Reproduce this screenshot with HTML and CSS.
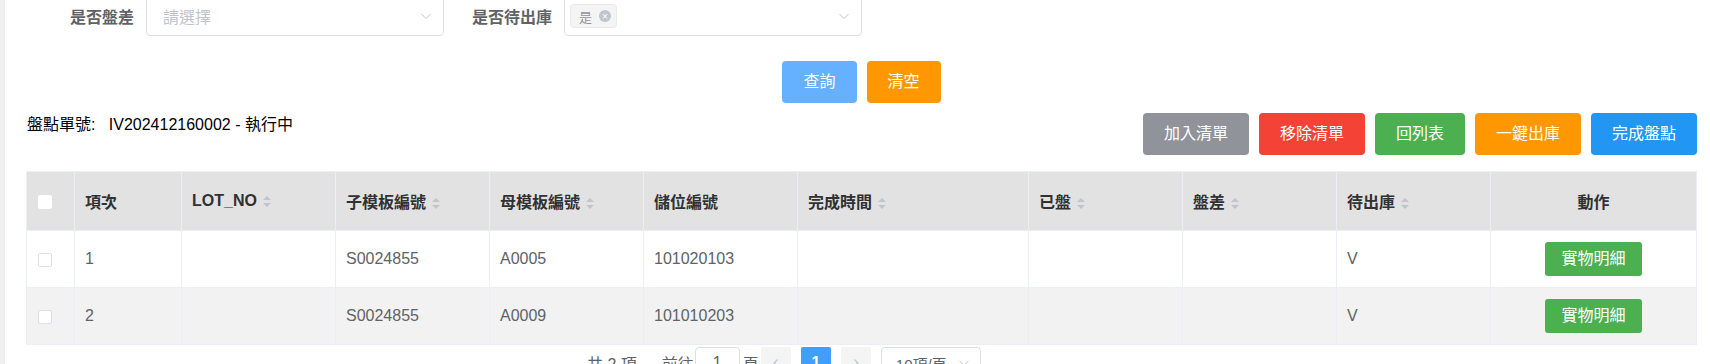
FILE: index.html
```html
<!DOCTYPE html>
<html lang="zh-Hant">
<head>
    <meta charset="UTF-8">
    <meta name="viewport" content="width=device-width, initial-scale=1.0">
    <title>盤點作業</title>
    <link rel="stylesheet" href="styles.css">
</head>
<body>
    <div class="layout">
        <div class="side-strip"></div>
        <div class="main">
            <div class="search-form">
                <div class="form-item first">
                    <label class="form-label">是否盤差</label>
                    <div class="select">
                        <span class="placeholder">請選擇</span>
                        <svg class="arrow" width="12" height="12" viewBox="0 0 12 12"><polyline points="1.5,4 6,8.5 10.5,4" fill="none" stroke="#c0c4cc" stroke-width="1"/></svg>
                    </div>
                </div>
                <div class="form-item">
                    <label class="form-label">是否待出庫</label>
                    <div class="select">
                        <span class="tag">是<span class="tag-close">&times;</span></span>
                        <svg class="arrow" width="12" height="12" viewBox="0 0 12 12"><polyline points="1.5,4 6,8.5 10.5,4" fill="none" stroke="#c0c4cc" stroke-width="1"/></svg>
                    </div>
                </div>
            </div>

            <div class="query-row">
                <button class="btn btn-query">查詢</button>
                <button class="btn btn-orange">清空</button>
            </div>

            <div class="info-row">
                <div class="order-info">盤點單號:&nbsp;&nbsp;&nbsp;IV202412160002 - 執行中</div>
                <div class="actions">
                    <button class="btn btn-gray">加入清單</button>
                    <button class="btn btn-red">移除清單</button>
                    <button class="btn btn-green">回列表</button>
                    <button class="btn btn-orange">一鍵出庫</button>
                    <button class="btn btn-blue">完成盤點</button>
                </div>
            </div>

            <table class="data-table">
                <colgroup>
                    <col style="width: 48px">
                    <col style="width: 107px">
                    <col style="width: 154px">
                    <col style="width: 154px">
                    <col style="width: 154px">
                    <col style="width: 154px">
                    <col style="width: 231px">
                    <col style="width: 154px">
                    <col style="width: 154px">
                    <col style="width: 154px">
                    <col style="width: 206px">
                </colgroup>
                <thead>
                    <tr>
                        <th><span class="checkbox head"></span></th>
                        <th>項次</th>
                        <th>LOT_NO<span class="caret"></span></th>
                        <th>子模板編號<span class="caret"></span></th>
                        <th>母模板編號<span class="caret"></span></th>
                        <th>儲位編號</th>
                        <th>完成時間<span class="caret"></span></th>
                        <th>已盤<span class="caret"></span></th>
                        <th>盤差<span class="caret"></span></th>
                        <th>待出庫<span class="caret"></span></th>
                        <th class="center">動作</th>
                    </tr>
                </thead>
                <tbody>
                    <tr>
                        <td><span class="checkbox"></span></td>
                        <td>1</td>
                        <td></td>
                        <td>S0024855</td>
                        <td>A0005</td>
                        <td>101020103</td>
                        <td></td>
                        <td></td>
                        <td></td>
                        <td>V</td>
                        <td class="center"><button class="btn btn-green btn-small">實物明細</button></td>
                    </tr>
                    <tr class="striped">
                        <td><span class="checkbox"></span></td>
                        <td>2</td>
                        <td></td>
                        <td>S0024855</td>
                        <td>A0009</td>
                        <td>101010203</td>
                        <td></td>
                        <td></td>
                        <td></td>
                        <td>V</td>
                        <td class="center"><button class="btn btn-green btn-small">實物明細</button></td>
                    </tr>
                </tbody>
            </table>

            <div class="pagination">
                <span class="total">共 2 項</span>
                <span class="jump">前往</span>
                <span class="page-input">1</span>
                <span class="jump-unit">頁</span>
                <span class="page-btn nav">
                    <svg width="10" height="10" viewBox="0 0 10 10"><polyline points="6.5,1.5 3,5 6.5,8.5" fill="none" stroke="#c0c4cc" stroke-width="1.2"/></svg>
                </span>
                <span class="page-btn active">1</span>
                <span class="page-btn nav">
                    <svg width="10" height="10" viewBox="0 0 10 10"><polyline points="3.5,1.5 7,5 3.5,8.5" fill="none" stroke="#c0c4cc" stroke-width="1.2"/></svg>
                </span>
                <span class="size-select">10項/頁
                    <svg width="12" height="12" viewBox="0 0 12 12"><polyline points="1.5,4 6,8.5 10.5,4" fill="none" stroke="#c0c4cc" stroke-width="1"/></svg>
                </span>
            </div>
        </div>
    </div>
</body>
</html>
```

FILE: styles.css
```css
body {
    margin: 0;
    font-family: "Liberation Sans", "Noto Sans CJK TC", sans-serif;
    background-color: #fff;
    height: 364px;
    overflow: hidden;
}
.layout {
    display: flex;
    min-height: 364px;
}
.side-strip {
    width: 5px;
    flex-shrink: 0;
    background-color: #efefef;
}
.main {
    flex: 1;
    padding: 0 14px 0 21px;
}

/* search form */
.search-form {
    display: flex;
    align-items: center;
    height: 40px;
    margin-top: -4px;
}
.form-item {
    display: flex;
    align-items: center;
    margin-left: 28px;
}
.form-item.first {
    margin-left: 44px;
}
.form-label {
    font-size: 16px;
    font-weight: bold;
    color: #606266;
    padding-right: 12px;
}
.select {
    width: 298px;
    height: 40px;
    box-sizing: border-box;
    border: 1px solid #dcdfe6;
    border-radius: 4px;
    display: flex;
    align-items: center;
    padding: 0 11px 0 5px;
}
.placeholder {
    font-size: 16px;
    color: #c0c4cc;
    padding-left: 11px;
}
.arrow {
    margin-left: auto;
}
.tag {
    display: inline-flex;
    align-items: center;
    height: 24px;
    box-sizing: border-box;
    padding: 0 5px 0 8px;
    background-color: #f4f4f5;
    border: 1px solid #e9e9eb;
    border-radius: 4px;
    font-size: 13px;
    color: #909399;
}
.tag-close {
    display: inline-flex;
    justify-content: center;
    align-items: center;
    width: 12px;
    height: 12px;
    margin-left: 7px;
    border-radius: 50%;
    background-color: #c0c4cc;
    color: #fff;
    font-size: 11px;
    line-height: 1;
}

/* buttons */
.btn {
    font-family: inherit;
    font-size: 16px;
    color: #fff;
    border: none;
    border-radius: 4px;
    height: 42px;
    padding: 0 21px;
    cursor: pointer;
    line-height: 1;
}
.btn-query { background-color: #66b1ff; }
.btn-orange { background-color: #ff9800; }
.btn-gray { background-color: #909399; }
.btn-red { background-color: #f44336; }
.btn-green { background-color: #4caf50; }
.btn-blue { background-color: #2196f3; }
.btn-small {
    height: 34px;
    padding: 0 16px;
    border-radius: 3px;
}
.query-row {
    display: flex;
    justify-content: center;
    gap: 10px;
    margin-top: 25px;
}
.info-row {
    display: flex;
    justify-content: space-between;
    align-items: flex-start;
    margin-top: 10px;
}
.order-info {
    font-size: 16px;
    color: #000;
    line-height: 20px;
    padding: 2px 0 0 1px;
}
.actions {
    display: flex;
    gap: 10px;
}

/* table */
.data-table {
    width: 1670px;
    table-layout: fixed;
    border-collapse: collapse;
    margin-top: 16px;
    font-size: 16px;
}
.data-table th,
.data-table td {
    border: 1px solid #ebeef5;
    padding: 0 10px;
    text-align: left;
    white-space: nowrap;
}
.data-table th {
    height: 58px;
    background-color: #e2e2e2;
    color: #303133;
    font-weight: bold;
}
.data-table td {
    height: 56px;
    color: #606266;
}
.data-table tr.striped td {
    background-color: #f2f2f2;
}
.data-table .center {
    text-align: center;
}
.data-table th:first-child,
.data-table td:first-child {
    padding: 0 0 0 11px;
}
.checkbox {
    display: inline-block;
    width: 14px;
    height: 14px;
    box-sizing: border-box;
    border: 1px solid #dcdfe6;
    border-radius: 2px;
    background-color: #fff;
    vertical-align: middle;
}
.checkbox.head {
    border-color: #fff;
}
.caret {
    display: inline-block;
    position: relative;
    width: 9px;
    height: 11px;
    margin-left: 6px;
    vertical-align: middle;
}
.caret::before,
.caret::after {
    content: "";
    position: absolute;
    left: 0;
    border-left: 4.5px solid transparent;
    border-right: 4.5px solid transparent;
}
.caret::before {
    top: 0;
    border-bottom: 4.5px solid #c0c4cc;
}
.caret::after {
    bottom: 0;
    border-top: 4.5px solid #c0c4cc;
}

/* pagination */
.pagination {
    display: flex;
    align-items: center;
    margin-top: 2px;
    padding-left: 561px;
    height: 32px;
    font-size: 16px;
    color: #606266;
}
.total {
    margin-right: 25px;
}
.page-input {
    width: 45px;
    height: 32px;
    box-sizing: border-box;
    border: 1px solid #dcdfe6;
    border-radius: 4px;
    display: inline-flex;
    justify-content: center;
    align-items: center;
    margin: 0 3px 0 0;
}
.jump {
    margin-right: 1px;
}
.jump-unit {
    margin-right: 2px;
}
.page-btn {
    width: 30px;
    height: 32px;
    display: inline-flex;
    justify-content: center;
    align-items: center;
    margin-right: 10px;
    border-radius: 2px;
    background-color: #f4f4f5;
    font-weight: bold;
}
.page-btn.active {
    background-color: #409eff;
    color: #fff;
}
.size-select {
    width: 100px;
    height: 32px;
    box-sizing: border-box;
    border: 1px solid #dcdfe6;
    border-radius: 4px;
    display: inline-flex;
    align-items: center;
    justify-content: space-between;
    padding: 0 10px 0 14px;
    font-size: 15px;
}
```
